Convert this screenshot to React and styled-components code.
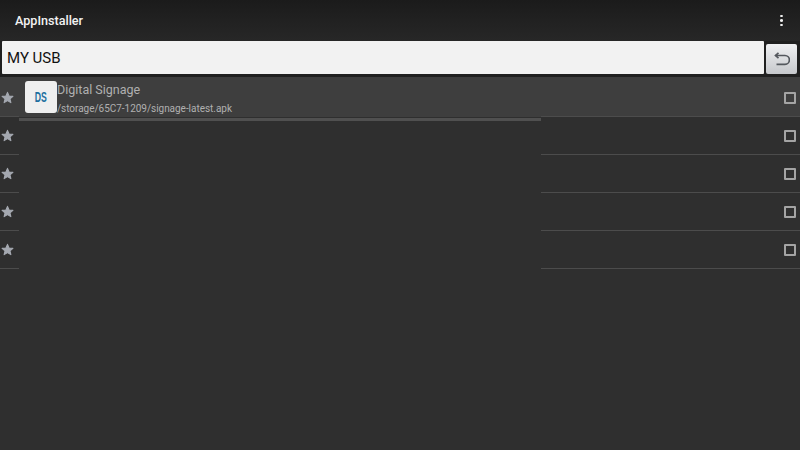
import React from 'react';
import styled, { createGlobalStyle } from 'styled-components';

const GlobalStyle = createGlobalStyle`
  html, body {
    margin: 0;
    padding: 0;
    background: #2f2f2f;
  }
  body {
    font-family: Roboto, "Liberation Sans", sans-serif;
  }
`;

const Page = styled.div`
  width: 800px;
  height: 450px;
  overflow: hidden;
  display: flex;
  flex-direction: column;
  background: #2f2f2f;
`;

const Header = styled.header`
  height: 41px;
  flex: none;
  display: flex;
  align-items: center;
  justify-content: space-between;
  padding: 0 17px 0 15px;
  box-sizing: border-box;
  background: linear-gradient(#1b1b1b, #272727);
`;

const Title = styled.h1`
  margin: 0;
  font-size: 12.6px;
  font-weight: 500;
  color: #f2f2f2;
`;

const MenuDots = styled.div`
  display: flex;
  flex-direction: column;
  gap: 2px;
`;

const Dot = styled.span`
  width: 3px;
  height: 2.5px;
  border-radius: 50%;
  background: #f0f0f0;
`;

const SearchBar = styled.div`
  height: 36px;
  flex: none;
  display: flex;
  gap: 2px;
  padding: 0 3px 0 2px;
  box-sizing: border-box;
  background: #202020;
`;

const PathInput = styled.div`
  flex: 1;
  height: 33px;
  display: flex;
  align-items: center;
  padding-left: 5px;
  box-sizing: border-box;
  background: #f2f2f2;
  border-radius: 1px;
  font-size: 15px;
  color: #111;
`;

const BackButton = styled.button`
  width: 31px;
  height: 30px;
  margin-top: 3px;
  padding: 0;
  display: flex;
  align-items: center;
  justify-content: center;
  border: none;
  border-radius: 2px;
  background: linear-gradient(#f0f1f3, #c6c8cc);
`;

const List = styled.div`
  display: flex;
  flex-direction: column;
`;

const Row = styled.div`
  height: 38px;
  flex: none;
  display: flex;
  position: relative;
  background: ${(props) => (props.$active ? '#3e3e3e' : 'transparent')};

  &:first-child {
    height: 40px;
    padding-top: 2px;
    box-sizing: border-box;
  }
`;

const StarCell = styled.div`
  width: 19px;
  flex: none;
  display: flex;
  align-items: center;
  justify-content: center;
  padding-right: 5px;
  box-sizing: border-box;
  border-bottom: 1px solid #4c4c4c;
`;

const Body = styled.div`
  width: 522px;
  flex: none;
  display: flex;
  align-items: flex-start;
  padding-left: 6px;
  box-sizing: border-box;
`;

const TailCell = styled.div`
  flex: 1;
  display: flex;
  align-items: center;
  justify-content: flex-end;
  padding-right: 4px;
  box-sizing: border-box;
  border-bottom: 1px solid #4c4c4c;
`;

const AppIcon = styled.div`
  width: 32px;
  height: 32px;
  margin-top: 2px;
  flex: none;
  display: flex;
  align-items: center;
  justify-content: center;
  background: #efefef;
  border-radius: 3px;
  font-family: "Liberation Sans", sans-serif;
  font-size: 14px;
  font-weight: 700;
  color: #1d6f9f;
`;

const IconLabel = styled.span`
  display: block;
  transform: scaleX(0.62);
`;

const AppText = styled.div`
  display: flex;
  flex-direction: column;
  padding-top: 2px;
`;

const AppName = styled.div`
  font-size: 12.5px;
  line-height: 17px;
  color: #b0b0b0;
`;

const AppPath = styled.div`
  margin-top: 4px;
  font-size: 10px;
  line-height: 13px;
  letter-spacing: -0.03px;
  color: #b0b0b0;
`;

const ProgressTrack = styled.div`
  position: absolute;
  left: 19px;
  top: 41px;
  width: 522px;
  height: 3px;
  background: #505050;
`;

const Checkbox = styled.span`
  width: 8px;
  height: 8px;
  border: 2px solid #a4a4a4;
  border-radius: 1px;
`;

const Star = () => (
  <svg width="13" height="13" viewBox="0 0 24 24" fill="#a4a8b0" stroke="#a4a8b0" strokeWidth="2" strokeLinejoin="round">
    <path d="M12 2.5l2.9 6.6 7.1.7-5.4 4.7 1.6 7-6.2-3.7-6.2 3.7 1.6-7L2 9.8l7.1-.7z" />
  </svg>
);

const BackArrow = () => (
  <svg width="16" height="14" viewBox="0 0 16 14" fill="none" stroke="#54585e" strokeWidth="1.7">
    <path d="M1.5 3.5h9.5a3.9 3.9 0 0 1 0 8.8H2.5" />
    <path d="M4.5 .8L1.5 3.5l3 2.7" />
  </svg>
);

const ROWS = [
  { id: 1, name: 'Digital Signage', path: '/storage/65C7-1209/signage-latest.apk' },
  { id: 2 },
  { id: 3 },
  { id: 4 },
  { id: 5 },
];

const App = () => (
  <Page>
    <GlobalStyle />
    <Header>
      <Title>AppInstaller</Title>
      <MenuDots>
        <Dot />
        <Dot />
        <Dot />
      </MenuDots>
    </Header>
    <SearchBar>
      <PathInput>MY USB</PathInput>
      <BackButton aria-label="Back">
        <BackArrow />
      </BackButton>
    </SearchBar>
    <List>
      {ROWS.map((row) => (
        <Row key={row.id} $active={Boolean(row.name)}>
          <StarCell>
            <Star />
          </StarCell>
          <Body>
            {row.name && (
              <>
                <AppIcon>
                  <IconLabel>DS</IconLabel>
                </AppIcon>
                <AppText>
                  <AppName>{row.name}</AppName>
                  <AppPath>{row.path}</AppPath>
                </AppText>
              </>
            )}
          </Body>
          <TailCell>
            <Checkbox />
          </TailCell>
          {row.name && <ProgressTrack />}
        </Row>
      ))}
    </List>
  </Page>
);

export default App;
